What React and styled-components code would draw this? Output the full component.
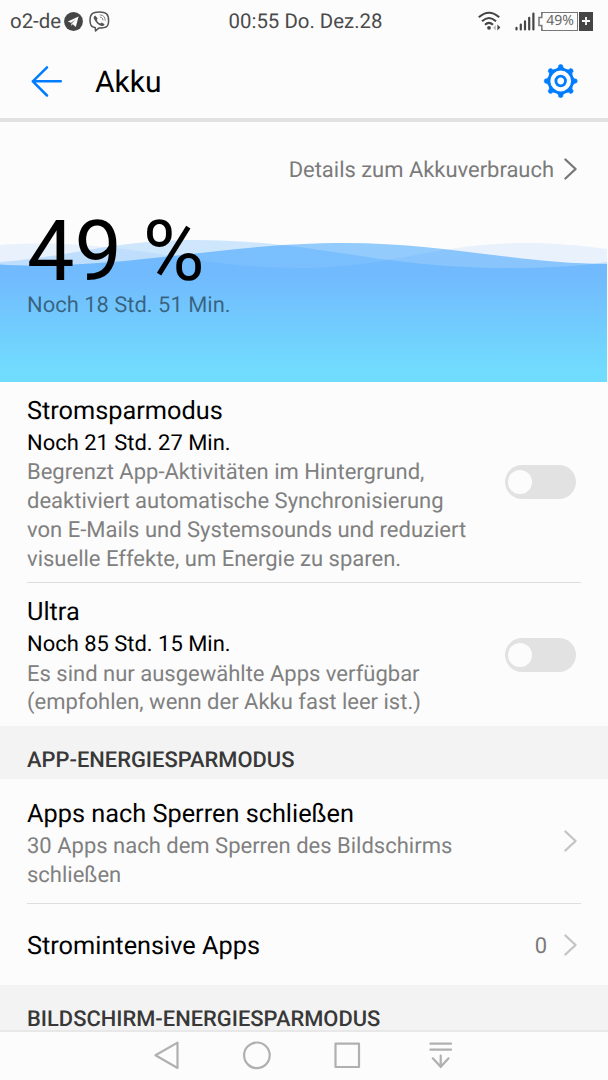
import React from "react";
import styled, { createGlobalStyle } from "styled-components";

const GlobalStyle = createGlobalStyle`
  * { box-sizing: border-box; }
  html, body { margin: 0; padding: 0; background: #fcfcfc; }
  body {
    font-family: Roboto, "Liberation Sans", sans-serif;
    color: #000;
    overflow: hidden;
    text-rendering: geometricPrecision;
  }
`;

const Screen = styled.div`
  width: 608px;
  height: 1080px;
  overflow: hidden;
  display: flex;
  flex-direction: column;
  background: #fcfcfc;
`;

const StatusBar = styled.header`
  height: 42px;
  flex: none;
  display: grid;
  grid-template-columns: 1fr auto 1fr;
  align-items: center;
  padding: 0 15px 0 10px;
  font-size: 20.4px;
  line-height: 42px;
  color: #4a4a4a;
`;

const Clock = styled.span`
  padding-left: 8px;
`;

const StatusGroup = styled.div`
  display: flex;
  align-items: center;
  justify-content: ${(p) => (p.$end ? "flex-end" : "flex-start")};
  height: 42px;
`;

const Icon = styled.svg`
  display: block;
  flex: none;
  overflow: visible;
  margin-left: ${(p) => p.$ml || 0}px;
`;

const BatteryLabel = styled.span`
  font-family: "Noto Sans", sans-serif;
  font-size: 14px;
  line-height: 18px;
  color: #666;
`;

const Battery = styled.div`
  display: flex;
  align-items: center;
  height: 19px;
  margin-left: 3px;
`;

const BatteryBody = styled.div`
  display: flex;
  align-items: center;
  justify-content: center;
  width: 35px;
  height: 19px;
  border: 1.5px solid #777;
  border-left: 0;
`;

const BatteryPlus = styled.div`
  width: 14px;
  height: 19px;
  margin-left: 1px;
  background: #454545;
  display: flex;
  align-items: center;
  justify-content: center;
`;

const Toolbar = styled.div`
  height: 80px;
  flex: none;
  display: flex;
  align-items: center;
  padding: 1px 29px 0 30px;
  border-bottom: 4px solid #e2e2e2;
`;

const Title = styled.h1`
  flex: 1;
  margin: 5px 0 0 31px;
  font-size: 30px;
  line-height: 36px;
  font-weight: 400;
`;

const Hero = styled.section`
  position: relative;
  height: 260px;
  flex: none;
  padding: 33px 29px 0 27px;
`;

const Waves = styled.svg`
  position: absolute;
  left: 0;
  top: 113px;
  display: block;
`;

const HeroContent = styled.div`
  position: relative;
  display: flex;
  flex-direction: column;
`;

const DetailsLink = styled.a`
  display: flex;
  align-items: center;
  justify-content: flex-end;
  height: 28px;
  font-size: 21.94px;
  color: #7a7a7a;
`;

const DetailsText = styled.span`
  padding-top: 2px;
`;

const Percent = styled.div`
  margin-top: 19px;
  font-size: 84.4px;
  line-height: 99px;
  height: 99px;
`;

const Remaining = styled.div`
  margin-top: -9px;
  font-size: 21.94px;
  line-height: 28px;
  color: rgba(0, 0, 0, 0.5);
`;

const Row = styled.div`
  display: flex;
  align-items: center;
  flex: none;
  height: ${(p) => p.$h}px;
  margin-left: 27px;
  margin-right: 27px;
  border-bottom: ${(p) => (p.$line ? "1px solid #dedede" : "0")};
`;

const RowText = styled.div`
  flex: 1;
  min-width: 0;
  white-space: nowrap;
  padding-top: ${(p) => p.$pt || 5}px;
`;

const RowTitle = styled.div`
  font-size: 25.3px;
  line-height: 34px;
`;

const RowSub = styled.div`
  font-size: 21.94px;
  line-height: 29.6px;
`;

const RowDescription = styled.div`
  margin-top: 1px;
  font-size: 22px;
  line-height: 28.7px;
  color: #808080;
`;

const Value = styled.span`
  font-size: 21.94px;
  margin-top: 3px;
  color: #7a7a7a;
`;

const ChevronBox = styled.span`
  display: flex;
  margin-left: ${(p) => p.$ml || 0}px;
  margin-right: ${(p) => p.$mr || 0}px;
`;

const Toggle = styled.button`
  display: flex;
  align-items: center;
  width: 71px;
  height: 34px;
  padding: 0 0 0 3px;
  margin-right: 5px;
  border: 0;
  border-radius: 17px;
  background: #e2e2e2;
`;

const Knob = styled.span`
  width: 24px;
  height: 24px;
  border-radius: 50%;
  background: #fcfcfc;
`;

const SectionHeader = styled.h2`
  flex: none;
  margin: 0;
  height: ${(p) => p.$h}px;
  padding: 20.5px 0 0 27px;
  background: #f3f3f3;
  font-size: 21.9px;
  line-height: 28px;
  font-weight: 500;
  color: #383838;
`;

const NavBar = styled.nav`
  flex: none;
  height: 50px;
  border-top: 2px solid #e8e8e8;
  display: flex;
  align-items: center;
  gap: 63px;
  padding-left: 153px;
  background: #fcfcfc;
`;

function Chevron({ color, ml, mr }) {
  return (
    <ChevronBox $ml={ml} $mr={mr}>
      <Icon width="15" height="24" viewBox="0 0 15 24" fill="none" stroke={color} strokeWidth="2.3" strokeLinecap="round" strokeLinejoin="round">
        <path d="M2.4 2.5 12.6 12 2.4 21.5" />
      </Icon>
    </ChevronBox>
  );
}

function Gear() {
  const teeth = [0, 45, 90, 135, 180, 225, 270, 315];
  return (
    <Icon width="36" height="36" viewBox="-17.7 -18 36 36" fill="none" stroke="#007dff">
      <circle r="11.8" strokeWidth="2.8" />
      <circle r="4.8" strokeWidth="2.8" />
      {teeth.map((a) => (
        <path key={a} transform={`rotate(${a})`} d="M-3.8-12.4C-2.3-13-2.2-14-2-15.7Q0-17.5 2-15.7C2.2-14 2.3-13 3.8-12.4Z" fill="#007dff" strokeWidth="0.6" />
      ))}
    </Icon>
  );
}

function StatusIcons() {
  return (
    <StatusGroup $end>
      <Icon width="23" height="20" viewBox="0 0 23 20" fill="none" stroke="#454545" strokeWidth="2.1">
        <path d="M.8 6.3Q11 -2.8 21.2 6.3" />
        <path d="M4 10.2Q11 3.8 18 10.2" />
        <path d="M7 13.8Q11 10 15 13.8" />
        <circle cx="11" cy="16.8" r="1.9" fill="#454545" stroke="none" />
        <path d="M17.8 14v5.4l-2.7-2.7z" fill="#bbb" stroke="none" />
        <path d="M19.4 13.5v6l3-3z" fill="#454545" stroke="none" />
      </Icon>
      <Icon $ml={14} width="20" height="19" viewBox="0 0 20 19" fill="none" stroke="#454545" strokeWidth="2.2" strokeLinecap="round">
        <path d="M1.5 15.8v1.6M5.8 12.6v4.8M10 9.3v8.1M14.2 5.8v11.6M18.4 1.6v15.8" />
      </Icon>
      <Battery>
        <Icon width="5" height="19" viewBox="0 0 5 19" fill="none" stroke="#777" strokeWidth="1.5">
          <path d="M5 .75H3.8V5.5H1v8h2.8v4.75H5" />
        </Icon>
        <BatteryBody>
          <BatteryLabel>49%</BatteryLabel>
        </BatteryBody>
        <BatteryPlus>
          <Icon width="8" height="8" viewBox="0 0 8 8" stroke="#fcfcfc" strokeWidth="1.8">
            <path d="M4 0v8M0 4h8" />
          </Icon>
        </BatteryPlus>
      </Battery>
    </StatusGroup>
  );
}

export default function App() {
  return (
    <Screen>
      <GlobalStyle />
      <StatusBar>
        <StatusGroup>
          o2-de
          <Icon $ml={3} width="19" height="19" viewBox="0 0 19 19">
            <circle cx="9.5" cy="9.5" r="9.4" fill="#454545" />
            <path d="M3.8 9.4 14.6 4.4 11.8 15 8.7 12.2 7 13.8V10.7z" fill="#fcfcfc" />
            <path d="M7 10.7 11.6 7.2 8.3 11.3 7 13.5z" fill="#8a8a8a" />
          </Icon>
          <Icon $ml={6} width="21" height="21" viewBox="0 0 21 21" fill="none" stroke="#555" strokeWidth="1.5" strokeLinejoin="round">
            <path d="M5 16.3C2 15.6 1 13.7 1 9.5 1 3.2 3.3 1 10.3 1S19.6 3.2 19.6 9.5 17.4 16.9 10 16.9L6.5 20 6.3 16.7z" />
            <path d="M6.2 4.4C4.5 5.2 4.3 6.7 5.2 8.2 6.8 11.5 9.2 13.8 12.5 15 14 15.4 15.2 14.7 15.5 13.3L12.8 11.4 11.3 12.5C9.5 11.8 8.5 10.6 7.8 8.9L8.7 7.5z" fill="#555" stroke="none" />
            <path d="M10.7 3.8C14.3 4 16.2 6 16.2 9.6M11 6.1C13 6.3 14 7.4 14 9.4" stroke="#888" strokeWidth="1" />
          </Icon>
        </StatusGroup>
        <Clock>00:55 Do. Dez.28</Clock>
        <StatusIcons />
      </StatusBar>

      <Toolbar>
        <Icon width="34" height="34" viewBox="0 0 34 34" fill="none" stroke="#007dff" strokeWidth="2.5" strokeLinecap="round" strokeLinejoin="round">
          <path d="M30.8 17.3H2.8M17 3.3 2.8 17.3 17 31.5" />
        </Icon>
        <Title>Akku</Title>
        <Gear />
      </Toolbar>

      <Hero>
        <Waves width="607" height="147" viewBox="0 235 607 147">
          <defs>
            <linearGradient id="water" gradientUnits="userSpaceOnUse" x1="0" y1="275" x2="0" y2="372">
              <stop offset="0" stopColor="#0c8bff" />
              <stop offset="1" stopColor="#0acbff" />
            </linearGradient>
          </defs>
          <g fill="url(#water)">
            <path fill="#1e80ff" opacity=".085" d="M0 245C25 243 50 243 75 244.5C165 250 210 268 300 268C390 268 435 243 525 243C555 243 580 245.5 607 249V382H0z" />
            <path opacity=".19" d="M0 262C75 256 115 240 195 240C315 240 375 268 510 268C545 268 580 266 607 262V382H0z" />
            <path opacity=".433" d="M0 264.5C15 265.5 35 265.8 55 265.3C160 262 240 243 345 243C445 243 520 264 607 264V382H0z" />
          </g>
        </Waves>
        <HeroContent>
          <DetailsLink>
            <DetailsText>Details zum Akkuverbrauch</DetailsText>
            <Chevron color="#777" ml={9} mr={1} />
          </DetailsLink>
          <Percent>49 %</Percent>
          <Remaining>Noch 18 Std. 51 Min.</Remaining>
        </HeroContent>
      </Hero>

      <Row $h={201} $line>
        <RowText>
          <RowTitle>Stromsparmodus</RowTitle>
          <RowSub>Noch 21 Std. 27 Min.</RowSub>
          <RowDescription>
            Begrenzt App-Aktivitäten im Hintergrund,<br />
            deaktiviert automatische Synchronisierung<br />
            von E-Mails und Systemsounds und reduziert<br />
            visuelle Effekte, um Energie zu sparen.
          </RowDescription>
        </RowText>
        <Toggle><Knob /></Toggle>
      </Row>
      <Row $h={143}>
        <RowText>
          <RowTitle>Ultra</RowTitle>
          <RowSub>Noch 85 Std. 15 Min.</RowSub>
          <RowDescription>
            Es sind nur ausgewählte Apps verfügbar<br />
            (empfohlen, wenn der Akku fast leer ist.)
          </RowDescription>
        </RowText>
        <Toggle><Knob /></Toggle>
      </Row>

      <SectionHeader $h={53}>APP-ENERGIESPARMODUS</SectionHeader>
      <Row $h={125} $line>
        <RowText $pt={7}>
          <RowTitle>Apps nach Sperren schließen</RowTitle>
          <RowDescription>
            30 Apps nach dem Sperren des Bildschirms<br />
            schließen
          </RowDescription>
        </RowText>
        <Chevron color="#c4c4c4" mr={3} />
      </Row>
      <Row $h={81}>
        <RowText $pt={5}>
          <RowTitle>Stromintensive Apps</RowTitle>
        </RowText>
        <Value>0</Value>
        <Chevron color="#c4c4c4" ml={16} mr={3} />
      </Row>

      <SectionHeader $h={45}>BILDSCHIRM-ENERGIESPARMODUS</SectionHeader>
      <NavBar>
        <Icon width="28" height="30" viewBox="0 0 28 30" fill="none" stroke="#b0b0b0" strokeWidth="2.2" strokeLinejoin="round">
          <path d="M24.5 1.6V27L2.5 14.3z" />
        </Icon>
        <Icon width="28" height="30" viewBox="0 0 28 30" fill="none" stroke="#b0b0b0" strokeWidth="2.2">
          <circle cx="12.9" cy="14.3" r="12.8" />
        </Icon>
        <Icon width="28" height="30" viewBox="0 0 28 30" fill="none" stroke="#b0b0b0" strokeWidth="2.2" strokeLinejoin="round">
          <rect x=".5" y="2.7" width="23.5" height="23.3" />
        </Icon>
        <Icon width="28" height="30" viewBox="0 0 28 30" fill="none" stroke="#b0b0b0" strokeWidth="2.2" strokeLinecap="round">
          <path d="M4.4 2.7h20.6M4.4 8.7h20.6M14.7 14.7v11M6.8 17.3l7.9 8.5 7.9-8.5" />
        </Icon>
      </NavBar>
    </Screen>
  );
}
